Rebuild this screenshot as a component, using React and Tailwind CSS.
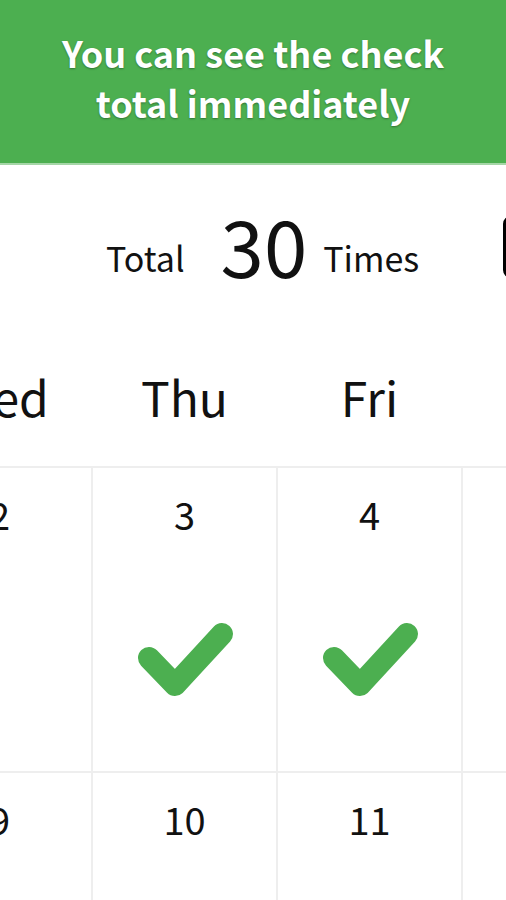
import React from "react"

const font = { fontFamily: '"Noto Sans CJK JP", "Noto Sans", sans-serif' }

const days = ["Wed", "Thu", "Fri", "Sat"]

const weeks = [
  [
    { date: 2, checked: false },
    { date: 3, checked: true },
    { date: 4, checked: true },
    { date: 5, checked: true },
  ],
  [
    { date: 9, checked: false },
    { date: 10, checked: false },
    { date: 11, checked: false },
    { date: 12, checked: false },
  ],
]

const Check = () => (
  <svg width="100" height="80" viewBox="0 0 100 80" className="mt-[84px]">
    <polyline
      points="14,38 40,65 87,14"
      fill="none"
      stroke="#4caf50"
      strokeWidth="22"
      strokeLinecap="round"
      strokeLinejoin="round"
    />
  </svg>
)

export default function App() {
  return (
    <div className="w-[506px] h-[900px] overflow-hidden bg-white text-[#111]" style={font}>
      {/* banner */}
      <div className="h-[165px] bg-[#4caf50] border-b-2 border-[#a5d6a7] flex items-center justify-center">
        <p className="text-white font-bold text-[36px] leading-[50px] text-center [text-shadow:0_1px_2px_rgba(0,0,0,0.35)] pb-[10px]">
          You can see the check
          <br />
          total immediately
        </p>
      </div>

      {/* total row */}
      <div className="h-[180px] flex items-center pl-[106px] pb-[16px] whitespace-nowrap">
        <div className="flex items-baseline shrink-0">
          <span className="text-[34px] -translate-y-[6px]">Total</span>
          <span className="text-[78px] leading-none ml-[36px]">30</span>
          <span className="text-[34px] ml-[16px] -translate-y-[6px]">Times</span>
        </div>
        <div className="shrink-0 ml-[84px] w-[120px] h-[62px] border-[4px] border-black rounded-lg" />
      </div>

      {/* calendar */}
      <div className="-ml-[92px] w-[738px]">
        <div className="grid grid-cols-4 gap-x-[2px] h-[121px] items-center pb-[20px]">
          {days.map((d) => (
            <div key={d} className="text-center text-[48px] leading-none">
              {d}
            </div>
          ))}
        </div>
        <div className="grid grid-cols-4 gap-[2px] bg-[#eeeeee] pt-[2px]">
          {weeks.flat().map((cell) => (
            <div key={cell.date} className="bg-white h-[303px] flex flex-col items-center pt-[24px]">
              <span className="text-[38px] leading-[44px]">{cell.date}</span>
              {cell.checked && <Check />}
            </div>
          ))}
        </div>
      </div>
    </div>
  )
}
